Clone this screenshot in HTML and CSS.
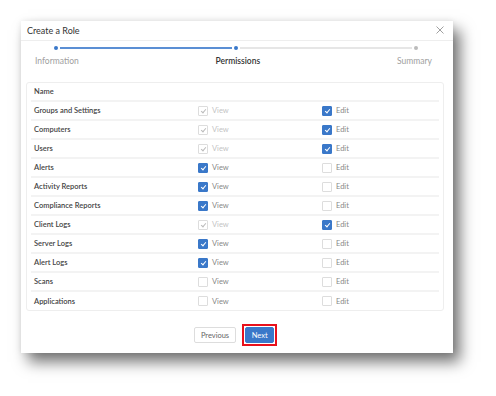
FILE: index.html
```html
<!DOCTYPE html>
<html lang="en">
<head>
  <meta charset="UTF-8">
  <title>Create a Role</title>
  <link rel="stylesheet" href="styles.css">
</head>
<body>
  <div class="dialog">
    <div class="dialog-header">
      <span class="dialog-title">Create a Role</span>
      <svg class="close-btn" width="8" height="8" viewBox="0 0 8 8">
        <path d="M0.5 0.5 L7.5 7.5 M7.5 0.5 L0.5 7.5" stroke="#888" stroke-width="0.8" fill="none"/>
      </svg>
    </div>

    <div class="stepper">
      <div class="step-track">
        <span class="dot done"></span>
        <span class="line done"></span>
        <span class="dot done"></span>
        <span class="line"></span>
        <span class="dot"></span>
      </div>
      <div class="step-labels">
        <span class="step-label">Information</span>
        <span class="step-label active">Permissions</span>
        <span class="step-label">Summary</span>
      </div>
    </div>

    <div class="perm-table">
      <div class="perm-row head"><span class="perm-name">Name</span></div>
      <div class="perm-row">
        <span class="perm-name">Groups and Settings</span>
        <span class="perm-cell"><span class="cb checked disabled"></span><span class="cb-label disabled">View</span></span>
        <span class="perm-cell"><span class="cb checked"></span><span class="cb-label">Edit</span></span>
      </div>
      <div class="perm-row">
        <span class="perm-name">Computers</span>
        <span class="perm-cell"><span class="cb checked disabled"></span><span class="cb-label disabled">View</span></span>
        <span class="perm-cell"><span class="cb checked"></span><span class="cb-label">Edit</span></span>
      </div>
      <div class="perm-row">
        <span class="perm-name">Users</span>
        <span class="perm-cell"><span class="cb checked disabled"></span><span class="cb-label disabled">View</span></span>
        <span class="perm-cell"><span class="cb checked"></span><span class="cb-label">Edit</span></span>
      </div>
      <div class="perm-row">
        <span class="perm-name">Alerts</span>
        <span class="perm-cell"><span class="cb checked"></span><span class="cb-label">View</span></span>
        <span class="perm-cell"><span class="cb"></span><span class="cb-label">Edit</span></span>
      </div>
      <div class="perm-row">
        <span class="perm-name">Activity Reports</span>
        <span class="perm-cell"><span class="cb checked"></span><span class="cb-label">View</span></span>
        <span class="perm-cell"><span class="cb"></span><span class="cb-label">Edit</span></span>
      </div>
      <div class="perm-row">
        <span class="perm-name">Compliance Reports</span>
        <span class="perm-cell"><span class="cb checked"></span><span class="cb-label">View</span></span>
        <span class="perm-cell"><span class="cb"></span><span class="cb-label">Edit</span></span>
      </div>
      <div class="perm-row">
        <span class="perm-name">Client Logs</span>
        <span class="perm-cell"><span class="cb checked disabled"></span><span class="cb-label disabled">View</span></span>
        <span class="perm-cell"><span class="cb checked"></span><span class="cb-label">Edit</span></span>
      </div>
      <div class="perm-row">
        <span class="perm-name">Server Logs</span>
        <span class="perm-cell"><span class="cb checked"></span><span class="cb-label">View</span></span>
        <span class="perm-cell"><span class="cb"></span><span class="cb-label">Edit</span></span>
      </div>
      <div class="perm-row">
        <span class="perm-name">Alert Logs</span>
        <span class="perm-cell"><span class="cb checked"></span><span class="cb-label">View</span></span>
        <span class="perm-cell"><span class="cb"></span><span class="cb-label">Edit</span></span>
      </div>
      <div class="perm-row">
        <span class="perm-name">Scans</span>
        <span class="perm-cell"><span class="cb"></span><span class="cb-label">View</span></span>
        <span class="perm-cell"><span class="cb"></span><span class="cb-label">Edit</span></span>
      </div>
      <div class="perm-row">
        <span class="perm-name">Applications</span>
        <span class="perm-cell"><span class="cb"></span><span class="cb-label">View</span></span>
        <span class="perm-cell"><span class="cb"></span><span class="cb-label">Edit</span></span>
      </div>
    </div>

    <div class="dialog-footer">
      <button class="btn btn-default">Previous</button>
      <span class="highlight"><button class="btn btn-primary">Next</button></span>
    </div>
  </div>
</body>
</html>
```

FILE: styles.css
```css
/* General */
html, body {
  min-height: 396px;
}

body {
  margin: 0;
  background: #fff;
  font-family: 'Lato', 'Noto Sans', sans-serif;
  font-size: 7.5px;
  color: #444;
}

/* Dialog */
.dialog {
  margin: 21px 0 0 21px;
  width: 432px;
  height: 332px;
  background: #fff;
  box-shadow: 7px 9px 14px rgba(0, 0, 0, 0.55), 0 0 6px rgba(0, 0, 0, 0.08);
  display: flex;
  flex-direction: column;
}

.dialog-header {
  height: 19px;
  padding: 0 9px 0 6px;
  border-bottom: 1px solid #eee;
  display: flex;
  justify-content: space-between;
  align-items: center;
}

.dialog-title {
  font-size: 9px;
  color: #333;
}

.close-btn {
  margin-top: -2px;
}

/* Stepper */
.stepper {
  padding: 4px 21px 0 14px;
  height: 36px;
}

.step-track {
  display: flex;
  align-items: center;
  padding: 0 14px 0 19px;
  height: 5px;
}

.dot {
  width: 4px;
  height: 4px;
  border-radius: 50%;
  background: #bbb;
}

.dot.done {
  background: #3a78c9;
}

.line {
  flex: 1;
  height: 2px;
  margin: 0 2px;
  background: #e6e6e6;
}

.line.done {
  background: #5b8fd4;
}

.step-labels {
  display: flex;
  justify-content: space-between;
  margin-top: 6px;
  font-size: 8.5px;
}

.step-label {
  color: #a0a0a0;
}

.step-label.active {
  color: #333;
  font-weight: 600;
}

/* Permission table */
.perm-table {
  margin: 1px 9px 0 5px;
  border: 1px solid #eee;
  border-radius: 3px;
  padding: 0 4px 0;
}

.perm-row {
  height: 19px;
  border-bottom: 2px solid #f3f3f3;
  box-sizing: border-box;
  display: flex;
  align-items: center;
  padding-left: 3px;
}

.perm-row:last-child {
  border-bottom: none;
  height: 18px;
}

.perm-name {
  width: 164px;
  flex-shrink: 0;
  color: #444;
  font-weight: 600;
}

.perm-cell {
  width: 124px;
  flex-shrink: 0;
  display: flex;
  align-items: center;
}

.perm-cell:last-child {
  flex: 1;
  width: auto;
}

/* Checkboxes */
.cb {
  width: 8px;
  height: 8px;
  border: 1px solid #ddd;
  border-radius: 1px;
  background: #fff;
  margin-right: 4px;
  position: relative;
}

.cb.checked {
  background: #3a78c9;
  border-color: #3a78c9;
}

.cb.checked::after {
  content: '';
  position: absolute;
  left: 2.5px;
  top: 1px;
  width: 2px;
  height: 4px;
  border: solid #fff;
  border-width: 0 1.2px 1.2px 0;
  transform: rotate(40deg);
}

.cb.checked.disabled {
  background: #fff;
  border-color: #ddd;
}

.cb.checked.disabled::after {
  border-color: #bbb;
}

.cb-label {
  color: #888;
}

.cb-label.disabled {
  color: #c4c4c4;
}

/* Footer */
.dialog-footer {
  margin-top: auto;
  display: flex;
  justify-content: center;
  align-items: center;
  gap: 6px;
  padding: 0 3px 7px 0;
}

.btn {
  font-family: inherit;
  font-size: 7.5px;
  height: 16px;
  padding: 0 6px;
  border-radius: 2px;
  cursor: pointer;
}

.btn-default {
  background: #fff;
  border: 1px solid #ddd;
  color: #666;
}

.highlight {
  border: 2px solid #e8101b;
  padding: 1px;
  display: flex;
}

.btn-primary {
  background: #3a78c9;
  border: 1px solid #3a78c9;
  color: #fff;
  width: 29px;
  padding: 0;
}
```
